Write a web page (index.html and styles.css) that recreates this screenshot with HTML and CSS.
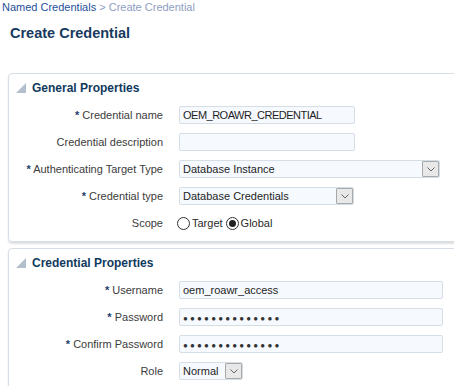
FILE: index.html
```html
<!DOCTYPE html>
<html lang="en">
  <head>
    <meta charset="UTF-8" />
    <meta name="viewport" content="width=device-width, initial-scale=1.0" />
    <title>Create Credential</title>
    <link rel="stylesheet" href="styles.css">
  </head>
  <body>
    <div class="breadcrumb">
      <a href="#">Named Credentials</a> <span class="current">&gt; Create Credential</span>
    </div>
    <h1>Create Credential</h1>

    <!-- General Properties -->
    <div class="panel">
      <h2>
        <svg class="disclosure" width="10" height="10" viewBox="0 0 10 10">
          <polygon points="0,10 10,0 10,10" fill="#b3bfcc" />
        </svg>
        General Properties
      </h2>
      <div class="form">
        <label><span class="req">*</span> Credential name</label>
        <div class="field short">OEM_ROAWR_CREDENTIAL</div>

        <label>Credential description</label>
        <div class="field short"></div>

        <label><span class="req">*</span> Authenticating Target Type</label>
        <div class="field select wide">
          <span class="value">Database Instance</span>
          <span class="arrow"><svg width="8" height="5" viewBox="0 0 8 5"><polyline points="0.5,0.5 4,4 7.5,0.5" fill="none" stroke="#666" /></svg></span>
        </div>

        <label><span class="req">*</span> Credential type</label>
        <div class="field select short-select">
          <span class="value">Database Credentials</span>
          <span class="arrow"><svg width="8" height="5" viewBox="0 0 8 5"><polyline points="0.5,0.5 4,4 7.5,0.5" fill="none" stroke="#666" /></svg></span>
        </div>

        <label>Scope</label>
        <div class="radios">
          <span class="radio"></span><span class="radio-label">Target</span>
          <span class="radio checked"></span><span class="radio-label">Global</span>
        </div>
      </div>
    </div>

    <!-- Credential Properties -->
    <div class="panel">
      <h2>
        <svg class="disclosure" width="10" height="10" viewBox="0 0 10 10">
          <polygon points="0,10 10,0 10,10" fill="#b3bfcc" />
        </svg>
        Credential Properties
      </h2>
      <div class="form">
        <label><span class="req">*</span> Username</label>
        <div class="field full">oem_roawr_access</div>

        <label><span class="req">*</span> Password</label>
        <div class="field full"><span class="dots">&#9679;&#9679;&#9679;&#9679;&#9679;&#9679;&#9679;&#9679;&#9679;&#9679;&#9679;&#9679;&#9679;&#9679;</span></div>

        <label><span class="req">*</span> Confirm Password</label>
        <div class="field full"><span class="dots">&#9679;&#9679;&#9679;&#9679;&#9679;&#9679;&#9679;&#9679;&#9679;&#9679;&#9679;&#9679;&#9679;&#9679;</span></div>

        <label>Role</label>
        <div class="field select tiny">
          <span class="value">Normal</span>
          <span class="arrow"><svg width="8" height="5" viewBox="0 0 8 5"><polyline points="0.5,0.5 4,4 7.5,0.5" fill="none" stroke="#666" /></svg></span>
        </div>
      </div>
    </div>
  </body>
</html>
```

FILE: styles.css
```css
* {
  margin: 0;
  padding: 0;
  box-sizing: border-box;
}
body {
  font-family: "Liberation Sans", Arial, sans-serif;
  font-size: 11px;
  color: #333;
  background: #fff;
  overflow: hidden;
}
.breadcrumb {
  line-height: 14px;
  padding-left: 2px;
}
.breadcrumb a {
  color: #1f4f9b;
  text-decoration: none;
}
.breadcrumb .current {
  color: #8e9dbf;
}
h1 {
  margin: 10px 0 0 10px;
  font-size: 14.5px;
  line-height: 18px;
  color: #173a5e;
}
.panel {
  margin: 31px -20px 0 8px;
  border: 1px solid #d6dde4;
  border-radius: 4px;
  padding-bottom: 9px;
  box-shadow: 0 2px 2px rgba(0, 0, 0, 0.13);
}
.panel + .panel {
  margin-top: 6px;
}
h2 {
  display: flex;
  align-items: center;
  gap: 6px;
  margin: 6px 0 0 7px;
  font-size: 12px;
  line-height: 16px;
  color: #0f3a5d;
}
.form {
  display: grid;
  grid-template-columns: 154px auto;
  column-gap: 16px;
  row-gap: 9px;
  align-items: center;
  justify-items: start;
  margin-top: 10px;
}
label {
  justify-self: end;
  color: #3c3c3c;
  white-space: nowrap;
}
.req {
  color: #1d3f6e;
  font-weight: bold;
}
.field {
  height: 18px;
  line-height: 16px;
  padding: 0 3px;
  border: 1px solid #d5dde5;
  border-radius: 2px;
  background: #f6faff;
  color: #1e1e1e;
  white-space: nowrap;
  overflow: hidden;
}
.short {
  width: 176px;
  letter-spacing: -0.5px;
}
.wide {
  width: 261px;
}
.short-select {
  width: 175px;
}
.full {
  width: 264px;
}
.tiny {
  width: 64px;
}
.select {
  display: flex;
  padding-right: 0;
}
.select .value {
  flex: 1;
}
.arrow {
  width: 17px;
  height: 16px;
  display: flex;
  align-items: center;
  justify-content: center;
  border: 1px solid #a9a9a9;
  border-radius: 1px;
  background: #e8e8e8;
}
.dots {
  font-size: 8px;
  letter-spacing: 2.2px;
  color: #333;
}
.radios {
  display: flex;
  align-items: center;
  height: 18px;
  margin-left: -2px;
  color: #2a2a2a;
}
.radio {
  width: 13px;
  height: 13px;
  border: 1px solid #333;
  border-radius: 50%;
  background: #fff;
  display: flex;
  align-items: center;
  justify-content: center;
}
.radio.checked::after {
  content: "";
  width: 7px;
  height: 7px;
  border-radius: 50%;
  background: #222;
}
.radio-label {
  margin: 0 3px 0 2px;
}
```
